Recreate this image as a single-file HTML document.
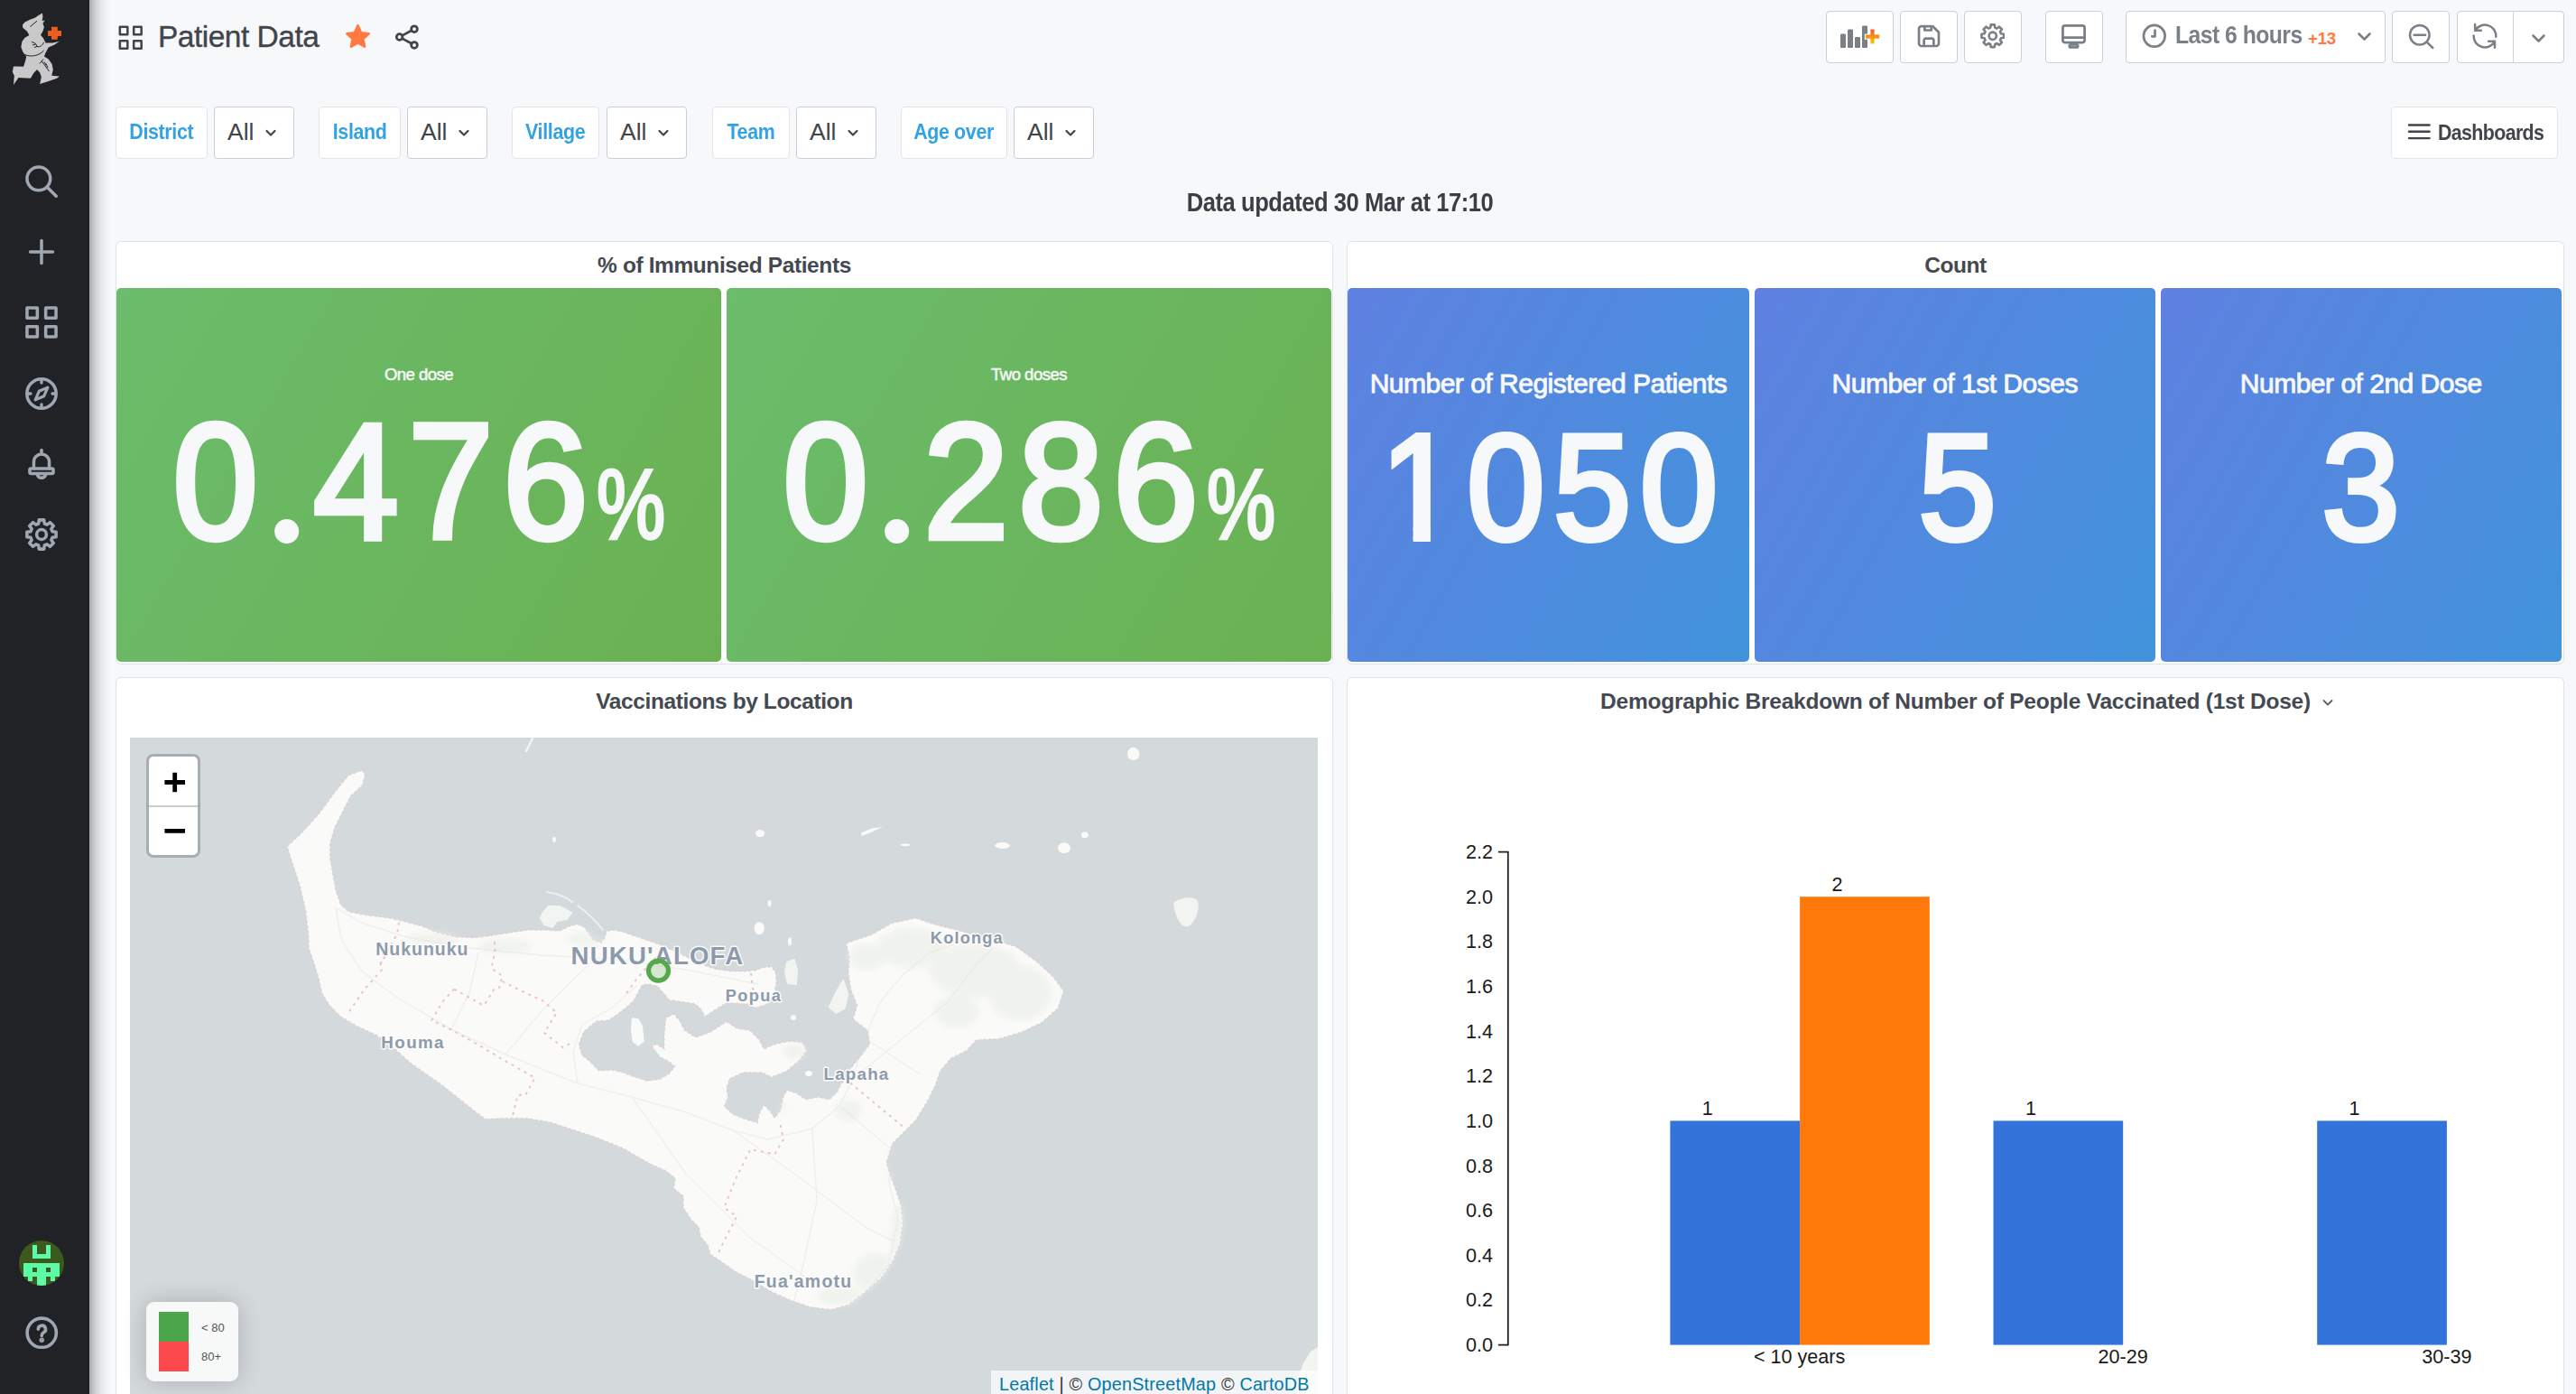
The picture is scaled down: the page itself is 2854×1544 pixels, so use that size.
<!DOCTYPE html>
<html lang="en">
<head>
<meta charset="utf-8">
<title>Patient Data - Grafana</title>
<style>
*{box-sizing:border-box;margin:0;padding:0}
html,body{width:2854px;height:1544px;overflow:hidden}
body{background:#f7f8fa;font-family:"Liberation Sans",sans-serif;color:#464c54;position:relative}
#root{position:relative;width:2854px;height:1544px;overflow:hidden}
.abs{position:absolute}
#side{left:0;top:0;width:99px;height:1544px;background:#202226}
#sideshadow{left:99px;top:0;width:26px;height:1544px;background:linear-gradient(90deg,rgba(30,32,40,.36) 0,rgba(30,32,40,.25) 4px,rgba(30,32,40,.14) 9px,rgba(30,32,40,.065) 15px,rgba(30,32,40,.02) 20px,rgba(30,32,40,0) 25px)}
.sicon{position:absolute;left:28px;width:36px;height:36px}
.tb{position:absolute;top:12px;height:58px;background:#fff;border:1.5px solid #c7d0d9;border-radius:4px}
.lbl{position:absolute;top:118px;height:58px;background:#fff;border:1.5px solid #e2e6ec;border-radius:5px;color:#33a2e5;font-weight:700;font-size:23.4px;letter-spacing:-.38px;line-height:55px;text-align:center;white-space:nowrap}
.val{position:absolute;top:118px;height:58px;width:89px;background:#fff;border:1.5px solid #c7d0d9;border-radius:4px;color:#41444b;font-size:26.5px;line-height:54px;padding-left:14px;white-space:nowrap}
.val svg{position:absolute;left:53.500px;top:21.500px}
.panel{position:absolute;background:#fff;border:1.5px solid #dde3ea;border-radius:6px}
.ptitle{position:absolute;font-weight:700;font-size:24.5px;letter-spacing:-.4px;color:#444951;white-space:nowrap;text-align:center;line-height:30px}
.tile{position:absolute;top:319px;height:414px;border-radius:5px;color:#f7f8fa;overflow:hidden}
.g{background:linear-gradient(120deg,#6bbc6c,#6ab152)}
.b{background:linear-gradient(120deg,#5f81e1,#4193dc)}
.tt{position:absolute;left:0;right:0;text-align:center;white-space:nowrap}
.big,.big2{-webkit-text-stroke:6.4px #f7f8fa;paint-order:stroke fill}
.big2{-webkit-text-stroke-width:6px}
.sq{display:inline-block;transform:scaleX(.915);transform-origin:50% 50%}
.sx{display:inline-block;transform:scaleX(.93);transform-origin:50% 50%}
.one{display:inline-block;clip-path:polygon(0 0,59.700px 0,59.700px 200px,38.900px 200px,38.900px 141.800px,0 141.800px)}
.dot{letter-spacing:3.700px;position:relative;color:transparent;-webkit-text-stroke-color:transparent}
.dot::after{content:"";position:absolute;left:8px;bottom:33.500px;width:28.600px;height:26.600px;border-radius:50%;background:#f7f8fa}
.pct{display:inline-block;font-size:109.600px;letter-spacing:0;-webkit-text-stroke-width:3.600px;transform:scaleX(.84);transform-origin:50% 100%;margin-right:-5.100px;margin-left:-9.400px}
.lab{font-size:18.5px;letter-spacing:-.5px;-webkit-text-stroke:.5px #f7f8fa}
.lab2{font-size:30px;letter-spacing:-.5px;-webkit-text-stroke:.9px #f7f8fa}
</style>
</head>
<body>
<div id="root">
<!-- sidebar -->
<div id="side" class="abs">
<svg class="abs" style="left:0;top:0" width="99" height="110" viewBox="0 0 99 110">
<path fill="#c9c9c9" d="M47 14.6L47.4 18.9 46.6 22.9 49.7 22.5 47.4 26 48.9 30 47.4 34.7 45 38.7 48.1 42.6 50.5 47.4 58.4 47.4 65.9 45.8 60 49.7 53.7 52.5 50.5 58.4 48.9 62.4 53.7 65.5 57.6 71 58.8 77.3 57.2 83.7 65.9 84.5 63.1 86.8 53.7 90 44.2 93.1 45.8 85.2 44.2 80.5 41 77 37.1 81.3 33.9 86.8 20.5 86 15 93.9 15.8 83.7 13.8 79.7 15 73.4 26 73.8 28 67.9 29.2 62.4 25.3 57.6 23.3 52.1 24.5 45.8 27.6 41.8 32.4 39.1 30 34.7 25.3 30.8 24.9 27.6 27.6 24.5 33.1 21.7 38.7 19.7 42.6 17Z"/>
<path fill="none" stroke="#202226" stroke-width="1" d="M33.5 29.5L41 23.2M27.5 60.5C34 63.5 43 62 48.5 56M35 46.5C38 47 40.5 48.5 41 51.5C44 52.5 47 50.5 48.5 47M36 50L39.5 49M38 52.5L41 51.5M44 70.5L48 65.5M46.5 68L54.5 79M49 68.5L51 72M51 70.5L53 75"/>
<path fill="#eb5e1f" d="M57 29.8h6.8v4.1h4.2v6h-4.2v3.9h-6.8v-3.9h-4v-6h4z"/>
</svg>
<svg class="sicon" style="top:183px" viewBox="0 0 24 24" fill="none" stroke="#9fa7b3" stroke-width="2.35" stroke-linecap="round"><circle cx="9.900" cy="9.900" r="8.600"/><path d="M16.300 16.300L22.800 22.800"/></svg>
<svg class="sicon" style="top:261px" viewBox="0 0 24 24" fill="none" stroke="#9fa7b3" stroke-width="2.35" stroke-linecap="round"><path d="M12 3.700v16.600M3.700 12h16.600"/></svg>
<svg class="sicon" style="top:339px" viewBox="0 0 24 24" fill="none" stroke="#9fa7b3" stroke-width="2.35" stroke-linejoin="round"><rect x="1.3" y="1.3" width="7.6" height="7.6"/><rect x="15.1" y="1.3" width="7.6" height="7.6"/><rect x="1.3" y="15.1" width="7.6" height="7.6"/><rect x="15.1" y="15.1" width="7.6" height="7.6"/></svg>
<svg class="sicon" style="top:418px" viewBox="0 0 24 24" fill="none" stroke="#9fa7b3" stroke-width="2.35" stroke-linecap="round" stroke-linejoin="round"><circle cx="12" cy="12" r="10.800"/><path d="M16.600 7.400L13.800 13.800 7.400 16.600 10.200 10.200Z" stroke-width="2.100"/><path d="M12 2.200v1.800M12 20v1.800M2.200 12h1.800M20 12h1.800" stroke-width="2.200"/></svg>
<svg class="sicon" style="top:495px" viewBox="0 0 24 24" fill="none" stroke="#9fa7b3" stroke-width="2.35" stroke-linecap="round" stroke-linejoin="round"><path d="M6.300 16V11a5.700 5.700 0 0 1 11.400 0V16"/><rect x="3.300" y="16" width="17.400" height="3.700" rx="1"/><path d="M9 20.800a3.200 3.200 0 0 0 6 0M12 2.300v1.500"/></svg>
<svg class="sicon" style="top:574px" viewBox="0 0 24 24" fill="none" stroke="#9fa7b3" stroke-width="2.35" stroke-linecap="round" stroke-linejoin="round"><circle cx="12" cy="12" r="3.6"/><path d="M9.78 4.00 10.20 1.25 13.80 1.25 14.22 4.00 16.09 4.78 18.33 3.13 20.87 5.67 19.22 7.91 20.00 9.78 22.75 10.20 22.75 13.80 20.00 14.22 19.22 16.09 20.87 18.33 18.33 20.87 16.09 19.22 14.22 20.00 13.80 22.75 10.20 22.75 9.78 20.00 7.91 19.22 5.67 20.87 3.13 18.33 4.78 16.09 4.00 14.22 1.25 13.80 1.25 10.20 4.00 9.78 4.78 7.91 3.13 5.67 5.67 3.13 7.91 4.78Z"/></svg>
<!-- avatar -->
<svg class="abs" style="left:21px;top:1374px" width="50" height="50" viewBox="0 0 50 50"><defs><clipPath id="avc"><circle cx="25" cy="25" r="25"/></clipPath></defs><g clip-path="url(#avc)"><rect width="50" height="50" fill="#3d5a1e"/><g fill="#5dfba5"><rect x="15" y="5" width="5" height="15"/><rect x="30" y="5" width="5" height="15"/><rect x="15" y="15" width="20" height="5"/><rect x="5" y="25" width="40" height="15"/><rect x="10" y="40" width="5" height="5"/><rect x="20" y="40" width="10" height="10"/><rect x="35" y="40" width="5" height="5"/></g><g fill="#3d5a1e"><rect x="15" y="30" width="5" height="5"/><rect x="30" y="30" width="5" height="5"/></g></g></svg>
<!-- help -->
<svg class="abs" style="left:28px;top:1457.500px" width="36.5" height="36.5" viewBox="0 0 24 24" fill="none" stroke="#9fa7b3" stroke-width="2.35" stroke-linecap="round" stroke-linejoin="round"><circle cx="12" cy="12" r="10.6"/><path d="M9.4 9.4a2.7 2.7 0 1 1 3.9 2.4c-.9.5-1.3 1-1.3 2v.3"/><circle cx="12" cy="17.3" r=".6" fill="#9fa7b3"/></svg>
</div>
<div id="sideshadow" class="abs"></div>
<!-- top nav -->
<svg class="abs" style="left:130.5px;top:27.500px" width="27.5" height="27.5" viewBox="0 0 24 24" fill="none" stroke="#41444b" stroke-width="2.2" stroke-linejoin="round"><rect x="1.6" y="1.6" width="7.4" height="7.4"/><rect x="15" y="1.6" width="7.4" height="7.4"/><rect x="1.6" y="15" width="7.4" height="7.4"/><rect x="15" y="15" width="7.4" height="7.4"/></svg>
<div class="abs" id="title" style="left:175px;top:20px;font-size:33.5px;line-height:42px;color:#41444b;white-space:nowrap;letter-spacing:-0.5px;-webkit-text-stroke:.35px #41444b">Patient Data</div>
<svg class="abs" style="left:381px;top:25px" width="31" height="31" viewBox="0 0 24 24"><polygon fill="#ff7941" stroke="#ff7941" stroke-width="2" stroke-linejoin="round" points="12,2.6 14.8,8.7 21.4,9.5 16.5,14 17.8,20.6 12,17.3 6.2,20.6 7.5,14 2.6,9.5 9.2,8.7"/></svg>
<svg class="abs" style="left:435.5px;top:25.500px" width="30" height="30" viewBox="0 0 24 24" fill="none" stroke="#41444b" stroke-width="2.2" stroke-linecap="round"><circle cx="18.4" cy="4.9" r="2.7"/><circle cx="5.3" cy="12" r="2.7"/><circle cx="18.4" cy="19.1" r="2.7"/><path d="M7.7 13.3L16 17.8M16 6.2L7.7 10.7"/></svg>

<div class="tb" style="left:2023px;width:75px">
<svg class="abs" style="left:15px;top:14px" width="46" height="28" viewBox="0 0 46 28"><g fill="#7b8087"><rect x="0" y="10.5" width="6" height="15.5" rx="1"/><rect x="8" y="5.5" width="6" height="20.5" rx="1"/><rect x="16" y="14" width="6" height="12" rx="1"/><rect x="24" y="1.5" width="6" height="24.5" rx="1"/></g><path d="M32.2 5.5h6.4v5h5.4v6.2h-5.4v5h-6.4v-5h-5.4v-6.2h5.4z" fill="#fff"/><defs><linearGradient id="og" x1="0" y1="0" x2="0" y2="1"><stop offset="0" stop-color="#f05a28"/><stop offset="1" stop-color="#fbca0a"/></linearGradient></defs><path d="M33.4 5.6h4.2v5.8h5.6v4.4h-5.6v5.8h-4.2v-5.8h-5.4v-4.4h5.4z" fill="url(#og)"/></svg>
</div>
<div class="tb" style="left:2105px;width:64px">
<svg class="abs" style="left:16.5px;top:12.9px" width="28" height="28" viewBox="0 0 24 24" fill="none" stroke="#7b8087" stroke-width="2.3" stroke-linejoin="round" stroke-linecap="round"><path d="M5 2.6h10.6L21.4 8.4V19a2.4 2.4 0 0 1-2.4 2.4H5A2.4 2.4 0 0 1 2.6 19V5A2.4 2.4 0 0 1 5 2.6z"/><path d="M7.4 21.2v-5.4a1.6 1.6 0 0 1 1.6-1.6h6a1.6 1.6 0 0 1 1.6 1.6v5.4M8 2.8v3.6h6.4V2.8"/></svg>
</div>
<div class="tb" style="left:2176px;width:64px">
<svg class="abs" style="left:16.75px;top:13.300px" width="27.5" height="27.5" viewBox="0 0 24 24" fill="none" stroke="#7b8087" stroke-width="2.3" stroke-linecap="round" stroke-linejoin="round"><circle cx="12" cy="12" r="3.600"/><path d="M9.78 4.00 10.20 1.25 13.80 1.25 14.22 4.00 16.09 4.78 18.33 3.13 20.87 5.67 19.22 7.91 20.00 9.78 22.75 10.20 22.75 13.80 20.00 14.22 19.22 16.09 20.87 18.33 18.33 20.87 16.09 19.22 14.22 20.00 13.80 22.75 10.20 22.75 9.78 20.00 7.91 19.22 5.67 20.87 3.13 18.33 4.78 16.09 4.00 14.22 1.25 13.80 1.25 10.20 4.00 9.78 4.78 7.91 3.13 5.67 5.67 3.13 7.91 4.78Z"/></svg>
</div>
<div class="tb" style="left:2266px;width:64px">
<svg class="abs" style="left:16px;top:12.600px" width="29" height="29" viewBox="0 0 24 24" fill="none" stroke="#7b8087" stroke-width="2.3" stroke-linecap="round" stroke-linejoin="round"><rect x="2" y="2" width="20" height="15.4" rx="2"/><path d="M2.4 13h19.2"/><rect x="8.2" y="19.4" width="7.6" height="2.4" rx="1"/></svg>
</div>
<div class="tb" style="left:2355px;width:288px">
<svg class="abs" style="left:16px;top:11.800px" width="29.6" height="29.6" viewBox="0 0 24 24" fill="none" stroke="#7b8087" stroke-width="2.2" stroke-linecap="round" stroke-linejoin="round"><circle cx="12" cy="12" r="9.6"/><path d="M12.6 7v5.4H10"/></svg>
<div class="abs" style="left:54px;top:-2.5px;line-height:55px;font-size:27.5px;font-weight:700;color:#7b8087;white-space:nowrap;letter-spacing:-0.6px;transform:scaleX(.9);transform-origin:0 50%">Last 6 hours</div>
<div class="abs" style="left:201px;top:1.500px;line-height:55px;font-size:18.6px;font-weight:700;color:#ff7941;white-space:nowrap;letter-spacing:-0.2px">+13</div>
<svg class="abs" style="left:253px;top:20px" width="22" height="16" viewBox="0 0 22 16" fill="none" stroke="#7b8087" stroke-width="2.6" stroke-linecap="round" stroke-linejoin="round"><path d="M4.500 4.500l6 6 6-6"/></svg>
</div>
<div class="tb" style="left:2650px;width:64px">
<svg class="abs" style="left:12.500px;top:8.500px" width="34" height="34" viewBox="0 0 34 34" fill="none" stroke="#7b8087" stroke-width="2.5" stroke-linecap="round"><circle cx="16.800" cy="16.800" r="10.800"/><path d="M24.700 24.700L31.300 31M10.600 16.800h12.600"/></svg>
</div>
<div class="tb" style="left:2722px;width:119px">
<svg class="abs" style="left:12.800px;top:10px" width="34" height="34" viewBox="0 0 34 34" fill="none" stroke="#7b8087" stroke-width="2.5" stroke-linecap="round" stroke-linejoin="round"><path d="M6.260 10.800A12.400 12.400 0 0 1 29.380 17.650M4.610 16.570A12.400 12.400 0 0 0 28 22.730M6.100 4.100V10.800H12.900M21.200 22.730H28V29.800"/></svg>
<div class="abs" style="left:61.200px;top:0;width:1.300px;height:56px;background:#ccd4dc"></div>
<svg class="abs" style="left:79px;top:22px" width="22" height="16" viewBox="0 0 22 16" fill="none" stroke="#7b8087" stroke-width="2.6" stroke-linecap="round" stroke-linejoin="round"><path d="M4.500 4.500l6 6 6-6"/></svg>
</div>
<!-- filters -->
<div class="lbl" style="left:128px;width:102px"><span class="sq">District</span></div>
<div class="val" style="left:237px">All<svg width="16" height="12" viewBox="0 0 16 12" fill="none" stroke="#41444b" stroke-width="2.2" stroke-linecap="round" stroke-linejoin="round"><path d="M3.500 4l4.500 4.500 4.500-4.500"/></svg></div>
<div class="lbl" style="left:353px;width:91px"><span class="sq">Island</span></div>
<div class="val" style="left:451px">All<svg width="16" height="12" viewBox="0 0 16 12" fill="none" stroke="#41444b" stroke-width="2.2" stroke-linecap="round" stroke-linejoin="round"><path d="M3.500 4l4.500 4.500 4.500-4.500"/></svg></div>
<div class="lbl" style="left:567px;width:97px"><span class="sq">Village</span></div>
<div class="val" style="left:672px">All<svg width="16" height="12" viewBox="0 0 16 12" fill="none" stroke="#41444b" stroke-width="2.2" stroke-linecap="round" stroke-linejoin="round"><path d="M3.500 4l4.500 4.500 4.500-4.500"/></svg></div>
<div class="lbl" style="left:789px;width:86px"><span class="sq">Team</span></div>
<div class="val" style="left:882px">All<svg width="16" height="12" viewBox="0 0 16 12" fill="none" stroke="#41444b" stroke-width="2.2" stroke-linecap="round" stroke-linejoin="round"><path d="M3.500 4l4.500 4.500 4.500-4.500"/></svg></div>
<div class="lbl" style="left:998px;width:118px"><span class="sq">Age over</span></div>
<div class="val" style="left:1123px">All<svg width="16" height="12" viewBox="0 0 16 12" fill="none" stroke="#41444b" stroke-width="2.2" stroke-linecap="round" stroke-linejoin="round"><path d="M3.500 4l4.500 4.500 4.500-4.500"/></svg></div>
<div class="abs" style="left:2649px;top:118px;width:185px;height:58px;background:#fff;border:1.5px solid #e2e6ec;border-radius:5px">
<svg class="abs" style="left:17px;top:17px" width="27" height="20" viewBox="0 0 27 20" fill="none" stroke="#41444b" stroke-width="2.4" stroke-linecap="round"><path d="M2 2.500h22.600M2 9.800h22.600M2 17.100h22.600"/></svg>
<div class="abs" style="left:51px;top:0;line-height:56px;font-size:23.4px;font-weight:700;color:#41444b;white-space:nowrap;letter-spacing:-0.7px;transform:scaleX(.915);transform-origin:0 50%">Dashboards</div>
</div>
<div class="abs" id="upd" style="left:128px;width:2713px;top:207px;text-align:center;font-size:28.6px;line-height:34px;font-weight:700;color:#3b3e44;white-space:nowrap;letter-spacing:-0.5px;transform:scaleX(.893);transform-origin:50% 50%">Data updated 30 Mar at 17:10</div>
<!-- panel 1 -->
<div class="panel" style="left:128px;top:267px;width:1349px;height:469px"></div>
<div class="ptitle" id="pt1" style="left:128px;width:1349px;top:279px">% of Immunised Patients</div>
<div class="tile g" style="left:129px;width:670px">
<div class="tt lab" style="top:80.8px;line-height:30px">One dose</div>
<div class="tt big" style="top:114.3px;font-size:182.4px;line-height:200px;letter-spacing:11.5px;padding-left:4px"><span class="sx">0<span class="dot">.</span>476<span class="pct">%</span></span></div>
</div>
<div class="tile g" style="left:805px;width:670px">
<div class="tt lab" style="top:80.8px;line-height:30px">Two doses</div>
<div class="tt big" style="top:114.3px;font-size:182.4px;line-height:200px;letter-spacing:11.5px;padding-left:4px"><span class="sx">0<span class="dot">.</span>286<span class="pct">%</span></span></div>
</div>
<!-- panel 2 -->
<div class="panel" style="left:1492px;top:267px;width:1349px;height:469px"></div>
<div class="ptitle" id="pt2" style="left:1492px;width:1349px;top:279px">Count</div>
<div class="tile b" style="left:1493px;width:445px">
<div class="tt lab2" style="top:86.1px;line-height:40px">Number of Registered Patients</div>
<div class="tt big2" style="top:120.3px;font-size:166.6px;line-height:200px;letter-spacing:10.4px;padding-left:10.4px"><span class="sx"><span class="one">1</span>050</span></div>
</div>
<div class="tile b" style="left:1943.5px;width:444.5px">
<div class="tt lab2" style="top:86.1px;line-height:40px">Number of 1st Doses</div>
<div class="tt big2" style="top:120.3px;font-size:166.6px;line-height:200px;letter-spacing:10.4px;padding-left:15.400px"><span class="sx">5</span></div>
</div>
<div class="tile b" style="left:2393.5px;width:444.5px">
<div class="tt lab2" style="top:86.1px;line-height:40px">Number of 2nd Dose</div>
<div class="tt big2" style="top:120.3px;font-size:166.6px;line-height:200px;letter-spacing:10.4px;padding-left:10.4px"><span class="sx">3</span></div>
</div>
<!-- panel 3 map -->
<div class="panel" style="left:128px;top:750px;width:1349px;height:820px"></div>
<div class="ptitle" id="pt3" style="left:128px;width:1349px;top:762px">Vaccinations by Location</div>
<svg class="abs" style="left:144px;top:817px" width="1316" height="727" viewBox="144 817 1316 727">
<rect x="144" y="817" width="1316" height="727" fill="#d4d9dc"/>
<path d="M401.2 853.2 404.4 858.0 401.2 869.8 388.2 881.7 379.6 898.9 371.0 916.0 365.6 933.3 365.6 950.5 368.9 969.9 372.1 987.0 377.5 1002.2 386.0 1009.7 401.2 1013.0 416.2 1015.0 433.4 1017.3 450.7 1021.6 467.9 1025.9 483.0 1032.3 504.5 1037.7 526.0 1038.8 543.2 1036.6 562.6 1033.4 584.0 1030.2 605.6 1030.2 620.0 1031.3 630.9 1025.9 639.6 1023.7 647.2 1027.0 652.6 1034.6 657.0 1041.0 665.7 1044.3 670.0 1038.9 672.2 1031.3 680.9 1030.2 690.7 1032.4 701.5 1036.2 712.4 1040.0 723.3 1043.8 730.9 1046.5 748.0 1054.0 765.0 1062.0 783.0 1070.4 793.9 1073.7 810.2 1075.9 826.5 1075.9 837.4 1074.8 846.0 1071.5 854.8 1071.0 859.1 1077.0 860.2 1087.8 858.0 1098.7 854.8 1106.8 848.3 1112.8 837.4 1116.0 826.5 1111.7 804.8 1110.7 796.0 1116.0 780.9 1125.9 776.5 1117.2 770.0 1111.7 755.9 1109.6 741.7 1107.4 734.1 1098.7 728.7 1092.2 717.8 1090.0 711.3 1091.0 707.0 1098.7 702.6 1107.4 696.0 1113.9 685.2 1122.6 674.3 1130.0 660.3 1130.9 646.5 1143.0 641.3 1156.8 644.8 1168.8 653.4 1175.7 663.7 1186.0 677.5 1185.2 689.5 1187.8 703.3 1193.0 717.0 1197.2 730.9 1195.5 741.2 1189.5 748.0 1180.9 741.2 1175.7 730.9 1170.5 722.3 1158.5 727.4 1156.8 736.0 1161.9 736.0 1146.4 737.8 1127.5 746.4 1123.2 753.2 1130.9 758.4 1141.3 770.5 1149.0 786.0 1143.8 804.9 1131.8 817.0 1139.5 830.7 1141.3 841.0 1151.6 846.2 1161.9 858.3 1156.8 875.5 1153.3 889.3 1155.0 893.6 1163.6 885.8 1174.0 872.0 1186.0 854.8 1192.9 844.5 1187.8 823.8 1187.8 808.4 1194.6 804.9 1205.0 806.6 1215.3 802.3 1225.6 811.8 1234.2 827.3 1240.3 839.3 1243.7 841.0 1234.2 846.2 1223.9 853.1 1230.8 858.3 1238.5 865.2 1229.0 867.8 1215.3 872.0 1207.5 882.4 1211.0 892.7 1217.9 906.5 1215.3 918.5 1217.9 927.2 1210.0 932.3 1199.8 935.7 1197.5 943.2 1182.5 954.0 1169.5 963.7 1156.6 961.5 1141.6 945.4 1128.6 949.7 1113.6 943.0 1096.4 940.0 1079.0 941.0 1062.0 937.8 1044.7 965.2 1035.5 988.5 1022.6 1014.3 1016.9 1035.0 1023.9 1060.8 1030.4 1099.5 1040.7 1125.4 1048.4 1148.6 1065.2 1166.7 1082.0 1178.3 1097.5 1171.9 1116.9 1153.8 1132.4 1133.0 1142.7 1107.3 1150.5 1081.5 1151.8 1071.0 1163.4 1053.0 1172.4 1041.4 1186.6 1036.3 1202.0 1027.2 1220.2 1014.3 1240.9 1001.4 1253.8 988.5 1266.7 982.0 1287.4 985.3 1298.9 991.7 1316.1 998.2 1335.5 1000.3 1354.8 997.1 1376.4 989.6 1395.7 976.7 1415.1 959.5 1430.2 940.0 1445.2 920.7 1450.6 897.0 1447.4 875.5 1439.9 854.0 1430.2 832.5 1417.3 815.2 1408.6 800.2 1397.9 787.3 1389.3 784.0 1378.5 776.5 1369.9 774.3 1359.1 765.7 1350.5 757.1 1337.6 757.1 1324.7 746.4 1316.1 748.5 1305.3 737.8 1296.7 718.4 1288.1 692.6 1273.0 687.4 1270.4 661.6 1260.0 635.8 1251.5 610.0 1242.9 584.1 1238.5 558.3 1238.5 537.6 1239.4 522.1 1227.4 506.6 1215.3 489.4 1201.5 472.2 1189.5 455.0 1177.4 437.8 1161.9 417.1 1146.4 394.7 1136.1 377.5 1125.8 365.4 1113.7 356.8 1099.9 353.4 1084.4 348.2 1067.2 342.2 1050.0 342.0 1036.6 338.7 1008.6 332.3 980.7 323.7 954.8 318.3 937.6 334.4 922.6 353.8 901.0 371.0 877.4 386.0 859.0Z" fill="#fafaf8"/>
<path d="M1300 1001C1303 995 1322 991 1327 998C1329.500 1006 1325 1021 1317 1026C1310 1028.500 1303 1020 1300 1001Z" fill="#f1f4f0"/>
<path d="M700.7 1128.3 706.8 1129.2 711.0 1136.0 712.8 1153.3 706.8 1157.6 701.6 1153.3 699.9 1139.5Z" fill="#fafaf8" stroke="#fafaf8" stroke-width="2" stroke-linejoin="round"/>
<path d="M934.2 1085.9 939.4 1101.4 935.5 1116.9 926.5 1122.0 918.7 1115.6 926.5 1098.8Z" fill="#f1f4f0" stroke="#f1f4f0" stroke-width="2" stroke-linejoin="round"/>
<path d="M601.0 1012.0 608.0 1004.0 620.0 1004.0 633.0 1011.0 628.0 1018.0 617.0 1020.0 612.0 1027.0 603.0 1024.0 599.0 1017.0Z" fill="#f1f4f0" stroke="#f1f4f0" stroke-width="2" stroke-linejoin="round"/>
<path d="M872.0 1066.0 880.0 1063.0 883.0 1075.0 882.0 1090.0 873.0 1089.0 870.0 1077.0Z" fill="#f1f4f0" stroke="#f1f4f0" stroke-width="2" stroke-linejoin="round"/>
<path d="M1460 1492L1452 1497 1444 1510 1438 1525 1436 1544H1460Z" fill="#f3f5f1"/>
<path d="M590 818L583 832" stroke="#f3f3f1" stroke-width="2.5" stroke-linecap="round"/>
<path d="M953.7 922.8L966 917.5 978 915.8 966 921.5 955 926Z" fill="#fafaf8"/>
<path d="M606 988C618 990 628 994 634 999M640 1003C650 1010 660 1020 668 1030" stroke="#eef0ee" stroke-width="2" fill="none" stroke-linecap="round"/>
<ellipse cx="1255.7" cy="835" rx="6.8" ry="7.2" fill="#fafaf8"/>
<ellipse cx="842" cy="923.1" rx="5" ry="4" fill="#fafaf8"/>
<ellipse cx="1003" cy="935.8" rx="5" ry="1.5" fill="#fafaf8"/>
<ellipse cx="1110.5" cy="936.6" rx="8.5" ry="3.5" fill="#fafaf8"/>
<ellipse cx="1179" cy="939.2" rx="7" ry="6" fill="#fafaf8"/>
<ellipse cx="1201.9" cy="924.7" rx="4" ry="3.5" fill="#fafaf8"/>
<ellipse cx="841.2" cy="1028.2" rx="5.5" ry="7" fill="#fafaf8"/>
<ellipse cx="852.6" cy="1000.5" rx="2" ry="3.5" fill="#fafaf8"/>
<ellipse cx="875" cy="1042.7" rx="2" ry="4.5" fill="#fafaf8"/>
<ellipse cx="614" cy="930" rx="2" ry="3" fill="#fafaf8"/>
<ellipse cx="879" cy="1127" rx="3" ry="3" fill="#fafaf8"/>
<ellipse cx="896" cy="1189" rx="4" ry="3" fill="#fafaf8"/>
<g fill="#eef2ec" opacity=".85" filter="url(#bl)">
<defs><filter id="bl" x="-20%" y="-20%" width="140%" height="140%"><feGaussianBlur stdDeviation="3"/></filter><clipPath id="lc"><path d="M401.2 853.2 404.4 858.0 401.2 869.8 388.2 881.7 379.6 898.9 371.0 916.0 365.6 933.3 365.6 950.5 368.9 969.9 372.1 987.0 377.5 1002.2 386.0 1009.7 401.2 1013.0 416.2 1015.0 433.4 1017.3 450.7 1021.6 467.9 1025.9 483.0 1032.3 504.5 1037.7 526.0 1038.8 543.2 1036.6 562.6 1033.4 584.0 1030.2 605.6 1030.2 620.0 1031.3 630.9 1025.9 639.6 1023.7 647.2 1027.0 652.6 1034.6 657.0 1041.0 665.7 1044.3 670.0 1038.9 672.2 1031.3 680.9 1030.2 690.7 1032.4 701.5 1036.2 712.4 1040.0 723.3 1043.8 730.9 1046.5 748.0 1054.0 765.0 1062.0 783.0 1070.4 793.9 1073.7 810.2 1075.9 826.5 1075.9 837.4 1074.8 846.0 1071.5 854.8 1071.0 859.1 1077.0 860.2 1087.8 858.0 1098.7 854.8 1106.8 848.3 1112.8 837.4 1116.0 826.5 1111.7 804.8 1110.7 796.0 1116.0 780.9 1125.9 776.5 1117.2 770.0 1111.7 755.9 1109.6 741.7 1107.4 734.1 1098.7 728.7 1092.2 717.8 1090.0 711.3 1091.0 707.0 1098.7 702.6 1107.4 696.0 1113.9 685.2 1122.6 674.3 1130.0 660.3 1130.9 646.5 1143.0 641.3 1156.8 644.8 1168.8 653.4 1175.7 663.7 1186.0 677.5 1185.2 689.5 1187.8 703.3 1193.0 717.0 1197.2 730.9 1195.5 741.2 1189.5 748.0 1180.9 741.2 1175.7 730.9 1170.5 722.3 1158.5 727.4 1156.8 736.0 1161.9 736.0 1146.4 737.8 1127.5 746.4 1123.2 753.2 1130.9 758.4 1141.3 770.5 1149.0 786.0 1143.8 804.9 1131.8 817.0 1139.5 830.7 1141.3 841.0 1151.6 846.2 1161.9 858.3 1156.8 875.5 1153.3 889.3 1155.0 893.6 1163.6 885.8 1174.0 872.0 1186.0 854.8 1192.9 844.5 1187.8 823.8 1187.8 808.4 1194.6 804.9 1205.0 806.6 1215.3 802.3 1225.6 811.8 1234.2 827.3 1240.3 839.3 1243.7 841.0 1234.2 846.2 1223.9 853.1 1230.8 858.3 1238.5 865.2 1229.0 867.8 1215.3 872.0 1207.5 882.4 1211.0 892.7 1217.9 906.5 1215.3 918.5 1217.9 927.2 1210.0 932.3 1199.8 935.7 1197.5 943.2 1182.5 954.0 1169.5 963.7 1156.6 961.5 1141.6 945.4 1128.6 949.7 1113.6 943.0 1096.4 940.0 1079.0 941.0 1062.0 937.8 1044.7 965.2 1035.5 988.5 1022.6 1014.3 1016.9 1035.0 1023.9 1060.8 1030.4 1099.5 1040.7 1125.4 1048.4 1148.6 1065.2 1166.7 1082.0 1178.3 1097.5 1171.9 1116.9 1153.8 1132.4 1133.0 1142.7 1107.3 1150.5 1081.5 1151.8 1071.0 1163.4 1053.0 1172.4 1041.4 1186.6 1036.3 1202.0 1027.2 1220.2 1014.3 1240.9 1001.4 1253.8 988.5 1266.7 982.0 1287.4 985.3 1298.9 991.7 1316.1 998.2 1335.5 1000.3 1354.8 997.1 1376.4 989.6 1395.7 976.7 1415.1 959.5 1430.2 940.0 1445.2 920.7 1450.6 897.0 1447.4 875.5 1439.9 854.0 1430.2 832.5 1417.3 815.2 1408.6 800.2 1397.9 787.3 1389.3 784.0 1378.5 776.5 1369.9 774.3 1359.1 765.7 1350.5 757.1 1337.6 757.1 1324.7 746.4 1316.1 748.5 1305.3 737.8 1296.7 718.4 1288.1 692.6 1273.0 687.4 1270.4 661.6 1260.0 635.8 1251.5 610.0 1242.9 584.1 1238.5 558.3 1238.5 537.6 1239.4 522.1 1227.4 506.6 1215.3 489.4 1201.5 472.2 1189.5 455.0 1177.4 437.8 1161.9 417.1 1146.4 394.7 1136.1 377.5 1125.8 365.4 1113.7 356.8 1099.9 353.4 1084.4 348.2 1067.2 342.2 1050.0 342.0 1036.6 338.7 1008.6 332.3 980.7 323.7 954.8 318.3 937.6 334.4 922.6 353.8 901.0 371.0 877.4 386.0 859.0Z"/></clipPath></defs>
<g clip-path="url(#lc)">
<ellipse cx="1010" cy="1050" rx="38" ry="22"/>
<ellipse cx="1080" cy="1075" rx="50" ry="30"/>
<ellipse cx="1130" cy="1100" rx="35" ry="30"/>
<ellipse cx="1060" cy="1120" rx="25" ry="18"/>
<ellipse cx="960" cy="1060" rx="20" ry="14"/>
<ellipse cx="1005" cy="1370" rx="18" ry="45"/>
<ellipse cx="970" cy="1410" rx="25" ry="22"/>
<ellipse cx="930" cy="1435" rx="25" ry="10"/>
<ellipse cx="560" cy="1048" rx="30" ry="8"/>
<ellipse cx="480" cy="1040" rx="28" ry="7"/>
<ellipse cx="650" cy="1040" rx="22" ry="8"/>
<ellipse cx="880" cy="1165" rx="12" ry="8"/>
<ellipse cx="860" cy="1225" rx="10" ry="10"/>
<ellipse cx="940" cy="1230" rx="14" ry="12"/>
<ellipse cx="990" cy="1290" rx="8" ry="20"/>
</g></g>
<g fill="none" stroke="#e6e6e4" stroke-width="1.4" stroke-linejoin="round" opacity=".55" clip-path="url(#lc)">
<path d="M372 1005 400 1022 450 1038 520 1050 600 1058 680 1062 760 1074 840 1090"/>
<path d="M372 1005 378 1040 400 1075 440 1105 500 1140 560 1168 640 1200 700 1215 760 1232 812 1252 850 1262 900 1250 930 1225 945 1195 958 1150 975 1110 1000 1080 1030 1055 1060 1045"/>
<path d="M640 1200 635 1165 645 1135 680 1115 705 1092"/>
<path d="M945 1195 1000 1150 1050 1110 1080 1070 1100 1050"/>
<path d="M958 1150 1020 1190"/>
<path d="M930 1225 990 1275 985 1310 995 1350 985 1400 960 1430"/>
<path d="M812 1252 880 1300 960 1360 990 1375"/>
<path d="M560 1168 600 1120 640 1080 660 1062"/>
<path d="M500 1140 520 1100 530 1055"/>
<path d="M700 1215 760 1300 830 1370 900 1420"/>
<path d="M900 1250 905 1330 890 1400 880 1440"/>
</g>
<path d="M401.2 853.2 404.4 858.0 401.2 869.8 388.2 881.7 379.6 898.9 371.0 916.0 365.6 933.3 365.6 950.5 368.9 969.9 372.1 987.0 377.5 1002.2 386.0 1009.7 401.2 1013.0 416.2 1015.0 433.4 1017.3 450.7 1021.6 467.9 1025.9 483.0 1032.3 504.5 1037.7 526.0 1038.8 543.2 1036.6 562.6 1033.4 584.0 1030.2 605.6 1030.2 620.0 1031.3 630.9 1025.9 639.6 1023.7 647.2 1027.0 652.6 1034.6 657.0 1041.0 665.7 1044.3 670.0 1038.9 672.2 1031.3 680.9 1030.2 690.7 1032.4 701.5 1036.2 712.4 1040.0 723.3 1043.8 730.9 1046.5 748.0 1054.0 765.0 1062.0 783.0 1070.4 793.9 1073.7 810.2 1075.9 826.5 1075.9 837.4 1074.8 846.0 1071.5 854.8 1071.0 859.1 1077.0 860.2 1087.8 858.0 1098.7 854.8 1106.8 848.3 1112.8 837.4 1116.0 826.5 1111.7 804.8 1110.7 796.0 1116.0 780.9 1125.9 776.5 1117.2 770.0 1111.7 755.9 1109.6 741.7 1107.4 734.1 1098.7 728.7 1092.2 717.8 1090.0 711.3 1091.0 707.0 1098.7 702.6 1107.4 696.0 1113.9 685.2 1122.6 674.3 1130.0 660.3 1130.9 646.5 1143.0 641.3 1156.8 644.8 1168.8 653.4 1175.7 663.7 1186.0 677.5 1185.2 689.5 1187.8 703.3 1193.0 717.0 1197.2 730.9 1195.5 741.2 1189.5 748.0 1180.9 741.2 1175.7 730.9 1170.5 722.3 1158.5 727.4 1156.8 736.0 1161.9 736.0 1146.4 737.8 1127.5 746.4 1123.2 753.2 1130.9 758.4 1141.3 770.5 1149.0 786.0 1143.8 804.9 1131.8 817.0 1139.5 830.7 1141.3 841.0 1151.6 846.2 1161.9 858.3 1156.8 875.5 1153.3 889.3 1155.0 893.6 1163.6 885.8 1174.0 872.0 1186.0 854.8 1192.9 844.5 1187.8 823.8 1187.8 808.4 1194.6 804.9 1205.0 806.6 1215.3 802.3 1225.6 811.8 1234.2 827.3 1240.3 839.3 1243.7 841.0 1234.2 846.2 1223.9 853.1 1230.8 858.3 1238.5 865.2 1229.0 867.8 1215.3 872.0 1207.5 882.4 1211.0 892.7 1217.9 906.5 1215.3 918.5 1217.9 927.2 1210.0 932.3 1199.8 935.7 1197.5 943.2 1182.5 954.0 1169.5 963.7 1156.6 961.5 1141.6 945.4 1128.6 949.7 1113.6 943.0 1096.4 940.0 1079.0 941.0 1062.0 937.8 1044.7 965.2 1035.5 988.5 1022.6 1014.3 1016.9 1035.0 1023.9 1060.8 1030.4 1099.5 1040.7 1125.4 1048.4 1148.6 1065.2 1166.7 1082.0 1178.3 1097.5 1171.9 1116.9 1153.8 1132.4 1133.0 1142.7 1107.3 1150.5 1081.5 1151.8 1071.0 1163.4 1053.0 1172.4 1041.4 1186.6 1036.3 1202.0 1027.2 1220.2 1014.3 1240.9 1001.4 1253.8 988.5 1266.7 982.0 1287.4 985.3 1298.9 991.7 1316.1 998.2 1335.5 1000.3 1354.8 997.1 1376.4 989.6 1395.7 976.7 1415.1 959.5 1430.2 940.0 1445.2 920.7 1450.6 897.0 1447.4 875.5 1439.9 854.0 1430.2 832.5 1417.3 815.2 1408.6 800.2 1397.9 787.3 1389.3 784.0 1378.5 776.5 1369.9 774.3 1359.1 765.7 1350.5 757.1 1337.6 757.1 1324.7 746.4 1316.1 748.5 1305.3 737.8 1296.7 718.4 1288.1 692.6 1273.0 687.4 1270.4 661.6 1260.0 635.8 1251.5 610.0 1242.9 584.1 1238.5 558.3 1238.5 537.6 1239.4 522.1 1227.4 506.6 1215.3 489.4 1201.5 472.2 1189.5 455.0 1177.4 437.8 1161.9 417.1 1146.4 394.7 1136.1 377.5 1125.8 365.4 1113.7 356.8 1099.9 353.4 1084.4 348.2 1067.2 342.2 1050.0 342.0 1036.6 338.7 1008.6 332.3 980.7 323.7 954.8 318.3 937.6 334.4 922.6 353.8 901.0 371.0 877.4 386.0 859.0Z" fill="none" stroke="#e9b9c0" stroke-width="1.5" stroke-dasharray="2 3.500" opacity=".55"/>
<g fill="none" stroke="#e6a9b3" stroke-width="1.9" stroke-dasharray="3 5" stroke-linecap="butt" opacity=".7">
<path d="M426.6 1059.5 421.4 1068.9 423.1 1074.1 403.3 1096.5 384.4 1124"/>
<path d="M442 1021.6 439.9 1034.5 420.5 1068.9"/>
<path d="M503.2 1095.6 491.1 1108.5 478.2 1130 498 1139.5 530.7 1157.6 554.8 1172.3 592.7 1193.8 582.4 1212.7 573.8 1212.7 567.8 1236"/>
<path d="M503.2 1095.6 535.9 1113.7 548 1094.8 553.1 1093.9 556.6 1081 544.5 1072.4 547.1 1060.3 548.8 1050 547.5 1039.9"/>
<path d="M556.6 1087 575.5 1096.5 601.3 1108.5 616.8 1121.5 603 1143.8 623.7 1160.2 635.8 1153.3"/>
<path d="M864.7 1246.1 868 1262.3 858.3 1278.4 831.4 1273 815.2 1305.3 802.3 1337.6 816.3 1347.3 802.3 1374.2 794.8 1390.3"/>
<path d="M942 1199.5 1001.4 1248.6"/>
<path d="M694 1100 705 1085 716 1072 727 1060"/>
<path d="M832 1078 834 1095 838 1104"/>
</g>
<g font-family="Liberation Sans, sans-serif" fill="#8d9aac" stroke="#fafaf8" stroke-width="3" paint-order="stroke" stroke-linejoin="round">
<text x="416.2" y="1058.2" font-size="19.5" font-weight="700" letter-spacing="1.0">Nukunuku</text>
<text x="632.5" y="1067.7" font-size="27.6" font-weight="700" letter-spacing="1.2">NUKU&#39;ALOFA</text>
<text x="803.7" y="1109" font-size="18.2" font-weight="700" letter-spacing="1.4">Popua</text>
<text x="1030.8" y="1044.6" font-size="18.2" font-weight="700" letter-spacing="1.2">Kolonga</text>
<text x="422.3" y="1161" font-size="18.8" font-weight="700" letter-spacing="1.4">Houma</text>
<text x="912.5" y="1196" font-size="18.8" font-weight="700" letter-spacing="1.2">Lapaha</text>
<text x="835.7" y="1425.9" font-size="19.5" font-weight="700" letter-spacing="1.2">Fua&#39;amotu</text>
</g>
<circle cx="729.5" cy="1075.1" r="11" fill="rgba(86,166,75,.22)" stroke="#55a94a" stroke-width="5.2"/>
</svg>
<div class="abs" style="left:162px;top:835px;width:60px;height:115px;border-radius:8px;background:rgba(0,0,0,.2)"></div>
<div class="abs" style="left:165px;top:838px;width:54px;height:109px;border-radius:5px;background:#fff"></div>
<div class="abs" style="left:165px;top:892px;width:54px;height:1.5px;background:#ccc"></div>
<svg class="abs" style="left:165px;top:838px" width="54" height="109" viewBox="0 0 54 109" fill="none" stroke="#000" stroke-width="4.8"><path d="M17.4 28.500h22.600M28.700 17.800v21.400M17.400 82.400h22.600"/></svg>
<div class="abs" style="left:162px;top:1442px;width:102px;height:88px;border-radius:9px;background:rgba(255,255,255,.8);box-shadow:0 0 27px rgba(0,0,0,.2)"></div>
<div class="abs" style="left:176px;top:1453px;width:33px;height:33px;background:#4ba54b"></div>
<div class="abs" style="left:176px;top:1486px;width:33px;height:33px;background:#fc4a4c"></div>
<div class="abs" style="left:223px;top:1461px;font-size:13px;line-height:20px;color:#555;white-space:nowrap">&lt; 80</div>
<div class="abs" style="left:223px;top:1492.5px;font-size:13px;line-height:20px;color:#555;white-space:nowrap">80+</div>
<div class="abs" style="left:1098px;top:1518px;width:362px;height:26px;background:rgba(255,255,255,.7)"></div>
<div class="abs" id="attr" style="left:1107px;top:1520px;font-size:19.8px;line-height:27px;color:#333;white-space:nowrap;letter-spacing:.2px"><span style="color:#0078a8">Leaflet</span> | © <span style="color:#0078a8">OpenStreetMap</span> © <span style="color:#0078a8">CartoDB</span></div>
<!-- panel 4 chart -->
<div class="panel" style="left:1492px;top:750px;width:1349px;height:820px"></div>
<div class="ptitle" id="pt4" style="left:1492px;width:1349px;top:762px;letter-spacing:-.24px">Demographic Breakdown of Number of People Vaccinated (1st Dose)</div>
<svg class="abs" style="left:2570.500px;top:772px" width="16" height="12" viewBox="0 0 16 12" fill="none" stroke="#5c6068" stroke-width="1.8" stroke-linecap="round" stroke-linejoin="round"><path d="M3.500 4l4.500 4.500 4.500-4.500"/></svg>
<svg class="abs" style="left:1493px;top:800px" width="1347" height="744" viewBox="1493 800 1347 744" font-family="Liberation Sans, sans-serif" font-size="21.6" fill="#1a1a1a">
<path d="M1659.900 943.6H1670.8V1489.6H1659.900" fill="none" stroke="#222" stroke-width="1.8"/>
<text x="1654" y="951.0" text-anchor="end">2.2</text>
<text x="1654" y="1000.6" text-anchor="end">2.0</text>
<text x="1654" y="1050.3" text-anchor="end">1.8</text>
<text x="1654" y="1099.9" text-anchor="end">1.6</text>
<text x="1654" y="1149.5" text-anchor="end">1.4</text>
<text x="1654" y="1199.2" text-anchor="end">1.2</text>
<text x="1654" y="1248.8" text-anchor="end">1.0</text>
<text x="1654" y="1298.5" text-anchor="end">0.8</text>
<text x="1654" y="1348.1" text-anchor="end">0.6</text>
<text x="1654" y="1397.7" text-anchor="end">0.4</text>
<text x="1654" y="1447.4" text-anchor="end">0.2</text>
<text x="1654" y="1497.0" text-anchor="end">0.0</text>
<rect x="1850.4" y="1241.4" width="143.7" height="248.2" fill="#3274d9"/>
<text x="1891.8" y="1234.8" text-anchor="middle">1</text>
<rect x="1994.1" y="993.2" width="143.7" height="496.4" fill="#ff780a"/>
<text x="2035.5" y="986.6" text-anchor="middle">2</text>
<rect x="2208.5" y="1241.4" width="143.7" height="248.2" fill="#3274d9"/>
<text x="2249.9" y="1234.8" text-anchor="middle">1</text>
<rect x="2567.2" y="1241.4" width="143.7" height="248.2" fill="#3274d9"/>
<text x="2608.6" y="1234.8" text-anchor="middle">1</text>
<text x="1993.6" y="1509.8" text-anchor="middle">&lt; 10 years</text>
<text x="2352.2" y="1509.8" text-anchor="middle">20-29</text>
<text x="2710.9" y="1509.8" text-anchor="middle">30-39</text>
</svg>
</div></body></html>
